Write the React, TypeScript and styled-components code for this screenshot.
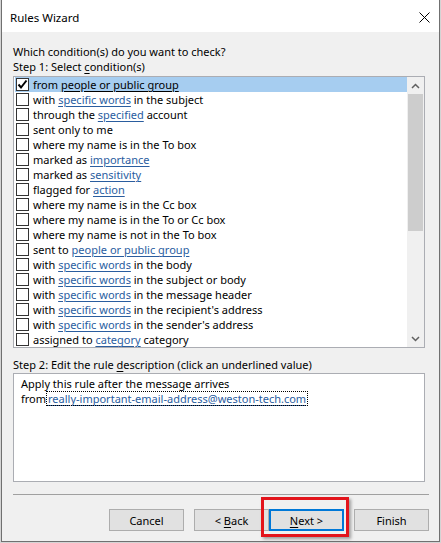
import React from 'react';
import styled, { createGlobalStyle } from 'styled-components';

const GlobalStyle = createGlobalStyle`
  html, body {
    margin: 0;
    padding: 0;
    background: #d4d4d4;
  }
  body {
    font-family: "Noto Sans", "Open Sans", sans-serif;
    font-size: 11px;
    color: #000;
  }
`;

type Part = { text: string; link?: boolean };

const CONDITIONS: Part[][] = [
  [{ text: 'from ' }, { text: 'people or public group', link: true }],
  [{ text: 'with ' }, { text: 'specific words', link: true }, { text: ' in the subject' }],
  [{ text: 'through the ' }, { text: 'specified', link: true }, { text: ' account' }],
  [{ text: 'sent only to me' }],
  [{ text: 'where my name is in the To box' }],
  [{ text: 'marked as ' }, { text: 'importance', link: true }],
  [{ text: 'marked as ' }, { text: 'sensitivity', link: true }],
  [{ text: 'flagged for ' }, { text: 'action', link: true }],
  [{ text: 'where my name is in the Cc box' }],
  [{ text: 'where my name is in the To or Cc box' }],
  [{ text: 'where my name is not in the To box' }],
  [{ text: 'sent to ' }, { text: 'people or public group', link: true }],
  [{ text: 'with ' }, { text: 'specific words', link: true }, { text: ' in the body' }],
  [{ text: 'with ' }, { text: 'specific words', link: true }, { text: ' in the subject or body' }],
  [{ text: 'with ' }, { text: 'specific words', link: true }, { text: ' in the message header' }],
  [{ text: 'with ' }, { text: 'specific words', link: true }, { text: " in the recipient's address" }],
  [{ text: 'with ' }, { text: 'specific words', link: true }, { text: " in the sender's address" }],
  [{ text: 'assigned to ' }, { text: 'category', link: true }, { text: ' category' }],
];

const Window = styled.div`
  margin-left: 1px;
  width: 437px;
  border: 1px solid #707070;
  border-top: none;
  background: #f0f0f0;
  display: flex;
  flex-direction: column;
`;

const TitleBar = styled.div`
  height: 32px;
  background: #fff;
  display: flex;
  align-items: center;
  justify-content: space-between;
  padding: 2px 9px 0 8px;
  box-sizing: border-box;
`;

const Title = styled.span`
  font-size: 11.5px;
`;

const Client = styled.div`
  display: flex;
  flex-direction: column;
  padding: 12px 10px 10px 11px;
`;

const Label = styled.div<{ $gap?: number }>`
  line-height: 15px;
  height: 15px;
  margin-top: ${(p) => p.$gap ?? 0}px;
  white-space: nowrap;
`;

const Key = styled.span`
  text-decoration: underline;
  text-underline-offset: 2px;
`;

const ListBox = styled.div`
  margin: 2px 4px 0 0;
  height: 270px;
  border: 1px solid #abadb3;
  background: #fff;
  display: flex;
`;

const Rows = styled.div`
  flex: 1;
  padding-left: 1px;
`;

const Row = styled.div<{ $selected?: boolean }>`
  height: 15px;
  display: flex;
  align-items: center;
  background: ${(p) => (p.$selected ? '#a6cdf0' : 'transparent')};
  white-space: nowrap;
`;

const Check = styled.span`
  width: 11px;
  height: 11px;
  margin: 0 4px 0 1px;
  border: 1px solid #333;
  background: #fff;
  flex: none;
  display: flex;
  align-items: center;
  justify-content: center;
`;

const RowText = styled.span`
  line-height: 15px;
`;

const Link = styled.span<{ $plain?: boolean }>`
  color: ${(p) => (p.$plain ? '#000' : '#2a5d9f')};
  text-decoration: underline;
  text-underline-offset: 2px;
`;

const ScrollBar = styled.div`
  width: 17px;
  background: #f0f0f0;
  display: flex;
  flex-direction: column;
  align-items: center;
`;

const Arrow = styled.div`
  height: 17px;
  width: 17px;
  display: flex;
  align-items: center;
  justify-content: center;
  flex: none;
`;

const Track = styled.div`
  flex: 1;
  width: 15px;
`;

const Thumb = styled.div`
  height: 137px;
  background: #cdcdcd;
`;

const DescBox = styled.div`
  margin: 1px 4px 0 0;
  height: 109px;
  border: 1px solid #abadb3;
  background: #fff;
  padding: 2px 7px 0;
  box-sizing: border-box;
`;

const DescLine = styled.div`
  line-height: 15px;
  height: 15px;
  white-space: nowrap;
  display: flex;
  align-items: center;
`;

const FocusLink = styled(Link)`
  margin-left: 1px;
  outline: 1px dotted #000;
  outline-offset: 0;
  padding: 0 1px;
  line-height: 13px;
`;

const Separator = styled.div`
  margin-top: 12px;
  height: 1px;
  background: #a0a0a0;
`;

const ButtonRow = styled.div`
  margin-top: 14px;
  display: flex;
  justify-content: flex-end;
`;

const Button = styled.div<{ $focused?: boolean; $gap?: number }>`
  position: relative;
  width: 75px;
  height: 22px;
  box-sizing: border-box;
  margin-left: ${(p) => p.$gap ?? 0}px;
  border: ${(p) => (p.$focused ? '2px solid #0078d7' : '1px solid #adadad')};
  background: #e1e1e1;
  display: flex;
  align-items: center;
  justify-content: center;
  white-space: pre;
`;

const Callout = styled.div`
  position: absolute;
  left: -10px;
  top: -14px;
  width: 88px;
  height: 40px;
  box-sizing: border-box;
  border: 3px solid #e3141c;
  box-shadow: 2px 2px 3px rgba(0, 0, 0, 0.35);
  pointer-events: none;
`;

const CloseIcon = () => (
  <svg width="11" height="11" viewBox="0 0 11 11">
    <path d="M0.5 0.5 L10.5 10.5 M10.5 0.5 L0.5 10.5" stroke="#000" strokeWidth="1" fill="none" />
  </svg>
);

const CheckMark = () => (
  <svg width="11" height="11" viewBox="0 0 11 11">
    <path d="M1.5 5.5 L4 8.5 L9.5 1.5" stroke="#000" strokeWidth="2" fill="none" />
  </svg>
);

const Chevron = ({ down }: { down?: boolean }) => (
  <svg width="9" height="6" viewBox="0 0 9 6">
    <path
      d={down ? 'M1 1 L4.5 4.5 L8 1' : 'M1 5 L4.5 1.5 L8 5'}
      stroke="#606060"
      strokeWidth="1.5"
      fill="none"
    />
  </svg>
);

const App = (): JSX.Element => (
  <>
    <GlobalStyle />
    <Window>
      <TitleBar>
        <Title>Rules Wizard</Title>
        <CloseIcon />
      </TitleBar>
      <Client>
        <Label>Which condition(s) do you want to check?</Label>
        <Label>
          Step 1: Select <Key>c</Key>ondition(s)
        </Label>
        <ListBox>
          <Rows>
            {CONDITIONS.map((parts, i) => (
              <Row key={i} $selected={i === 0}>
                <Check>{i === 0 && <CheckMark />}</Check>
                <RowText>
                  {parts.map((part, j) =>
                    part.link ? (
                      <Link key={j} $plain={i === 0}>
                        {part.text}
                      </Link>
                    ) : (
                      <React.Fragment key={j}>{part.text}</React.Fragment>
                    ),
                  )}
                </RowText>
              </Row>
            ))}
          </Rows>
          <ScrollBar>
            <Arrow>
              <Chevron />
            </Arrow>
            <Track>
              <Thumb />
            </Track>
            <Arrow>
              <Chevron down />
            </Arrow>
          </ScrollBar>
        </ListBox>
        <Label $gap={9}>
          Step 2: Edit the rule <Key>d</Key>escription (click an underlined value)
        </Label>
        <DescBox>
          <DescLine>Apply this rule after the message arrives</DescLine>
          <DescLine>
            from<FocusLink>really-important-email-address@weston-tech.com</FocusLink>
          </DescLine>
        </DescBox>
        <Separator />
        <ButtonRow>
          <Button>Cancel</Button>
          <Button $gap={10}>
            {'< '}
            <Key>B</Key>ack
          </Button>
          <Button $focused>
            <Key>N</Key>
            {'ext >'}
            <Callout />
          </Button>
          <Button $gap={10}>Finish</Button>
        </ButtonRow>
      </Client>
    </Window>
  </>
);

export default App;
